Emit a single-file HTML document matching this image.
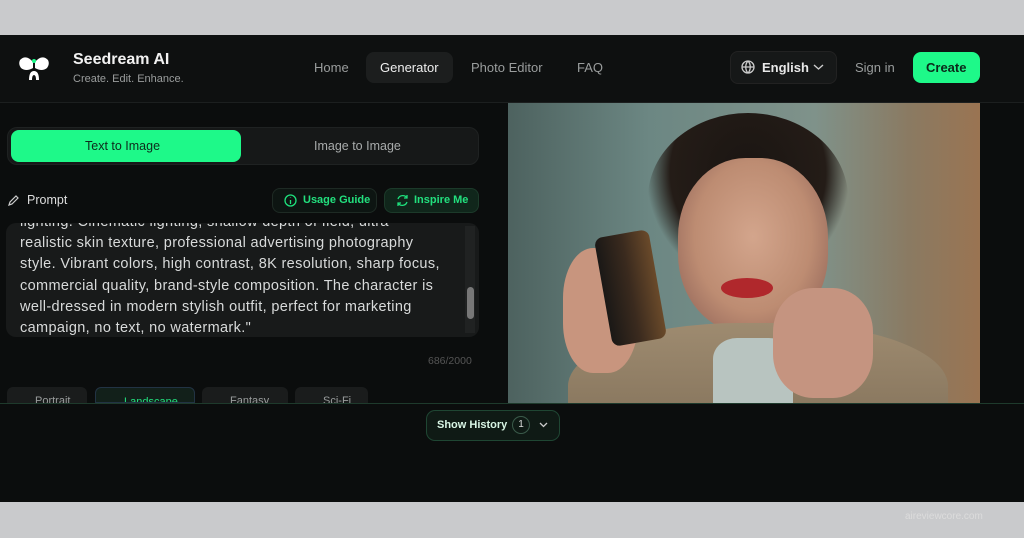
<!DOCTYPE html>
<html><head><style>
*{margin:0;padding:0;box-sizing:border-box}
body{width:1024px;height:538px;background:#c9cacc;font-family:"Liberation Sans",sans-serif;position:relative;overflow:hidden}
.main{position:absolute;left:0;top:35px;width:1024px;height:467px;background:#0b0d0d}
.hdr{position:absolute;left:0;top:0;width:1024px;height:68px;background:#0e1010;border-bottom:1px solid #1c1f1f}
.abs{position:absolute}
.nav{color:#9a9d9d;font-size:13px}
.btn{position:absolute;border-radius:8px}
.chip{position:absolute;top:352px;height:16px;border-radius:6px 6px 0 0;background:#1a1c1c;color:#9a9d9d;font-size:11px;padding:9px 0 0 28px;overflow:hidden;line-height:11px}
</style></head><body>
<div class="main">
 <div class="hdr">
  <svg class="abs" style="left:18px;top:19px" width="32" height="30" viewBox="0 0 32 30"><path d="M2 6 Q8 0 15 8 L15 14 Q8 18 3 14 Q0 10 2 6Z M30 6 Q24 0 17 8 L17 14 Q24 18 29 14 Q32 10 30 6Z" fill="#fff"/><circle cx="16" cy="7" r="2" fill="#1dfa8a"/><path d="M11 26 Q11 17 16 17 Q21 17 21 26 L18 26 Q18 21 16 21 Q14 21 14 26Z" fill="#fff"/></svg>
  <div class="abs" style="left:73px;top:16px;color:#f2f2f2;font-size:16px;font-weight:bold">Seedream AI</div>
  <div class="abs" style="left:73px;top:38px;color:#9a9d9d;font-size:11px">Create. Edit. Enhance.</div>
  <div class="abs nav" style="left:314px;top:25px">Home</div>
  <div class="btn" style="left:366px;top:17px;width:87px;height:31px;background:#1c1e1e"></div>
  <div class="abs" style="left:380px;top:25px;color:#eee;font-size:13px">Generator</div>
  <div class="abs nav" style="left:471px;top:25px">Photo Editor</div>
  <div class="abs nav" style="left:577px;top:25px">FAQ</div>
  <div class="btn" style="left:730px;top:16px;width:107px;height:33px;background:#161818;border:1px solid #222"></div>
  <svg class="abs" style="left:741px;top:25px" width="14" height="14" viewBox="0 0 14 14" fill="none" stroke="#ccc" stroke-width="1.3"><circle cx="7" cy="7" r="6"/><path d="M1 7h12M7 1c-3 3-3 9 0 12M7 1c3 3 3 9 0 12"/></svg>
  <div class="abs" style="left:762px;top:25px;color:#e8e8e8;font-size:13px;font-weight:bold">English</div>
  <svg class="abs" style="left:813px;top:28px" width="11" height="8" viewBox="0 0 11 8"><path d="M1 2l4.5 4 4.5-4" stroke="#ccc" stroke-width="1.4" fill="none"/></svg>
  <div class="abs nav" style="left:855px;top:25px">Sign in</div>
  <div class="btn" style="left:913px;top:17px;width:67px;height:31px;background:#1ef989"></div>
  <div class="abs" style="left:926px;top:25px;color:#0b2a1a;font-size:13px;font-weight:bold">Create</div>
 </div>
 <div class="btn" style="left:7px;top:92px;width:472px;height:38px;background:#161818;border:1px solid #1f2222;border-radius:10px"></div>
 <div class="btn" style="left:11px;top:95px;width:230px;height:32px;background:#1ef989"></div>
 <div class="abs" style="left:85px;top:104px;color:#0d2b1c;font-size:12.5px">Text to Image</div>
 <div class="abs" style="left:314px;top:104px;color:#a8abab;font-size:12.5px">Image to Image</div>
 <svg class="abs" style="left:7px;top:159px" width="13" height="13" viewBox="0 0 13 13"><path d="M2 11l1-3 6-6 2 2-6 6z" stroke="#ccc" fill="none" stroke-width="1.2"/></svg>
 <div class="abs" style="left:27px;top:158px;color:#ddd;font-size:12.5px">Prompt</div>
 <div class="btn" style="left:272px;top:153px;width:105px;height:25px;background:#0d1512;border:1px solid #1e2a24"></div>
 <svg class="abs" style="left:284px;top:159px" width="13" height="13" viewBox="0 0 13 13" fill="none" stroke="#1ee07c" stroke-width="1.3"><circle cx="6.5" cy="6.5" r="5.5"/><path d="M6.5 6v4M6.5 3.5v.5"/></svg>
 <div class="abs" style="left:303px;top:159px;color:#22e07e;font-size:11px;font-weight:bold">Usage Guide</div>
 <div class="btn" style="left:384px;top:153px;width:95px;height:25px;background:#10261b;border:1px solid #1c3a2a"></div>
 <svg class="abs" style="left:396px;top:159px" width="13" height="13" viewBox="0 0 13 13" fill="none" stroke="#1ee07c" stroke-width="1.3"><path d="M2 5a5 5 0 0 1 9-1M11 8a5 5 0 0 1-9 1M11 1v3H8M2 12V9h3"/></svg>
 <div class="abs" style="left:414px;top:159px;color:#22e07e;font-size:11px;font-weight:bold">Inspire Me</div>
 <div class="btn" style="left:6px;top:188px;width:473px;height:114px;background:#181a1a;overflow:hidden;border-radius:10px">
  <div style="position:absolute;left:14px;top:-11px;white-space:nowrap;color:#d8dada;font-size:14.5px;letter-spacing:0.35px;line-height:21.2px">lighting. Cinematic lighting, shallow depth of field, ultra<br>realistic skin texture, professional advertising photography<br>style. Vibrant colors, high contrast, 8K resolution, sharp focus,<br>commercial quality, brand-style composition. The character is<br>well-dressed in modern stylish outfit, perfect for marketing<br>campaign, no text, no watermark."</div>
  <div style="position:absolute;right:4px;top:3px;width:10px;height:107px;background:#202222"></div>
  <div style="position:absolute;right:5px;top:64px;width:7px;height:32px;background:#777;border-radius:4px"></div>
 </div>
 <div class="abs" style="left:428px;top:320px;color:#555;font-size:10.5px">686/2000</div>
 <div class="chip" style="left:7px;width:80px">Portrait</div>
 <div class="chip" style="left:95px;width:100px;color:#22e07e;background:#12201a;border:1px solid #234">Landscape</div>
 <div class="chip" style="left:202px;width:86px">Fantasy</div>
 <div class="chip" style="left:295px;width:73px">Sci-Fi</div>
 <div class="abs" style="left:0;top:368px;width:1024px;height:1px;background:#1e3a2c"></div>
 <div class="abs" style="left:508px;top:68px;width:472px;height:300px;overflow:hidden;background:linear-gradient(90deg,#4d625f 0%,#6c8783 30%,#7f928a 65%,#8a7a62 85%,#9a7452 100%)">
  <div class="abs" style="left:140px;top:10px;width:200px;height:170px;border-radius:50%;background:radial-gradient(ellipse at 50% 35%,#1a1512 0%,#241c17 55%,rgba(36,28,23,0) 72%)"></div>
  <div class="abs" style="left:170px;top:55px;width:150px;height:175px;border-radius:45%;background:radial-gradient(ellipse at 50% 45%,#d3a58c 0%,#bd8c72 55%,#9e7060 80%,rgba(150,110,90,0) 100%)"></div>
  <div class="abs" style="left:60px;top:220px;width:380px;height:140px;border-radius:45% 45% 0 0;background:linear-gradient(180deg,#9e8b70,#7d6c55)"></div>
  <div class="abs" style="left:205px;top:235px;width:80px;height:70px;background:#b8c4c0;border-radius:30% 30% 0 0"></div>
  <div class="abs" style="left:55px;top:145px;width:75px;height:125px;border-radius:40%;background:#c8957e"></div>
  <div class="abs" style="left:95px;top:130px;width:55px;height:110px;border-radius:8px;background:linear-gradient(90deg,#1a1816,#3a2a1e,#6a4a2a);transform:rotate(-10deg)"></div>
  <div class="abs" style="left:265px;top:185px;width:100px;height:110px;border-radius:40%;background:#c59480"></div>
  <div class="abs" style="left:213px;top:175px;width:52px;height:20px;border-radius:50%;background:#b0282c"></div>
 </div>
 <div class="btn" style="left:426px;top:375px;width:134px;height:31px;background:#0f1a15;border:1px solid #1f4633;border-radius:9px"></div>
 <div class="abs" style="left:437px;top:384px;color:#d8f5e5;font-size:11px;font-weight:bold">Show History</div>
 <div class="abs" style="left:512px;top:381px;width:18px;height:18px;border-radius:50%;border:1px solid #3a5a4a;color:#ddd;font-size:10px;text-align:center;line-height:16px">1</div>
 <svg class="abs" style="left:539px;top:387px" width="9" height="6" viewBox="0 0 9 6"><path d="M1 1l3.5 3.5L8 1" stroke="#ccc" stroke-width="1.3" fill="none"/></svg>
</div>
<div class="abs" style="left:905px;top:511px;color:#dcdcdc;font-size:10px">aireviewcore.com</div>
</body></html>
